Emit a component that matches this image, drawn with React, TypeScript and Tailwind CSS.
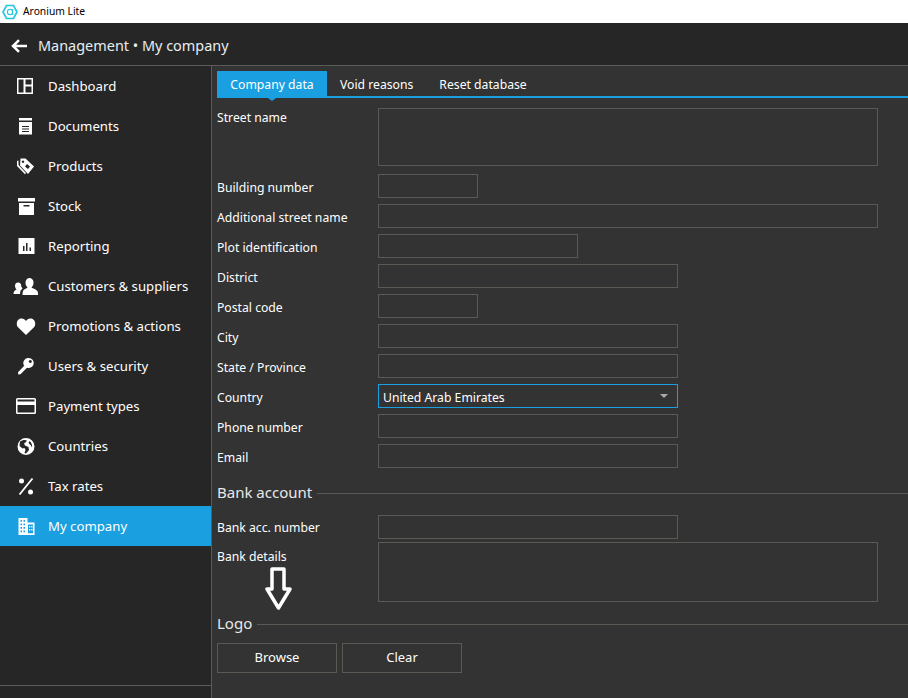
import React from "react";

const W = "#ffffff";

const icons: Record<string, React.ReactNode> = {
  dashboard: (
    <svg width="20" height="17" viewBox="0 0 20 17" fill="none"><path fill={W} fillRule="evenodd" d="M1 0h16v16H1zM2.500 1.500v13h5v-13zM9.500 1.500v5h6v-5zM9.500 8.500v6h6v-6z" /></svg>
  ),
  documents: (
    <svg width="20" height="17" viewBox="0 0 20 17"><path fill={W} fillRule="evenodd" d="M3 0h13v2.500H3zM3 4h13v12.500H3zM6 8v1h7V8zM6 10.500v1h7v-1zM6 13v1h7v-1z" /></svg>
  ),
  products: (
    <svg width="20" height="17" viewBox="0 0 20 17"><path fill={W} fillRule="evenodd" d="M4.500 0.500h5l8.500 8-6 7.500-8-8.500zM7 2.500a1.200 1.200 0 1 0 .01 0zM11 6l-2 2.500 3 2.500 2-2.500z" /><path fill={W} d="M2.500 2.500v4.500l7.500 8-1 1.200L1 8V3z" /></svg>
  ),
  stock: (
    <svg width="20" height="17" viewBox="0 0 20 17"><path fill={W} fillRule="evenodd" d="M2 0h17v3.500H2zM3 5h15v12H3zM7.500 7v1.500h6V7z" /></svg>
  ),
  reporting: (
    <svg width="20" height="17" viewBox="0 0 20 17"><path fill={W} fillRule="evenodd" d="M2.500 0h16v16h-16zM7 8v5h1.500V8zM10 5v8h1.500V5zM13.500 9.500V13H15V9.500z" /></svg>
  ),
  customers: (
    <svg width="26" height="17" viewBox="0 0 26 17"><path fill={W} d="M10 13.500c0-2 3.500-3 4.500-4-1.500-1.500-2-3-2-5C12.500 1.500 14.500 0 16.500 0s4 1.500 4 4.500c0 2-.5 3.500-2 5 1 1 6.500 2 6.500 5.500v2H9.500c0-1 0-2.500.5-3.500z" /><path fill={W} d="M0.500 16c0-2.500 1-3.500 3-4.500-1-1-1.500-2.300-1.500-3.700C2 5.500 3.500 4.500 5 4.500c1.300 0 2.300.6 3 1.800 0 1.700.5 3 1.500 4.200-.8 1-1.800 1.500-2 2.500-.3 1-.5 2-.5 3z" /></svg>
  ),
  heart: (
    <svg width="20" height="17" viewBox="0 0 20 17"><path fill={W} d="M10 17 2.300 9.600C.8 8.200.8 6.800.8 5.500.8 2.500 3 .5 5.700.5 7.500.5 9 1.500 10 3c1-1.500 2.500-2.500 4.300-2.500 2.700 0 4.900 2 4.900 5 0 1.300 0 2.700-1.500 4.100z" /></svg>
  ),
  key: (
    <svg width="20" height="17" viewBox="0 0 20 17"><path fill={W} fillRule="evenodd" d="M12.800 0a5 5 0 1 1-1.800 9.700L4.500 16.300 2.300 16.500 2 14.300l6.200-6.500A5 5 0 0 1 12.800 0zM14.300 2a1.500 1.500 0 1 0 .01 0z" /></svg>
  ),
  card: (
    <svg width="20" height="16" viewBox="0 0 20 16"><path fill={W} fillRule="evenodd" d="M1.500 0h17A1.500 1.500 0 0 1 20 1.500v13a1.500 1.500 0 0 1-1.500 1.500h-17A1.500 1.500 0 0 1 0 14.500v-13A1.500 1.500 0 0 1 1.500 0zM1.500 1.500V3.500h17V1.500zM1.500 7v7.500h17V7z" /></svg>
  ),
  globe: (
    <svg width="20" height="17" viewBox="0 0 20 17"><path fill={W} fillRule="evenodd" d="M10 0a8.500 8.500 0 1 1 0 17 8.500 8.500 0 0 1 0-17zM4 3.500 3.500 8l3 2.500 2-.5 1 2-1 3 1.500.5 3-3.500-.5-3-3.500-1.500-1-2 2-1.500 1-1.500C9 1.500 6 2 4 3.500zM13.500 3l-1 2 2.500 2.500 1 2c.5-2-.5-5-2.500-6.500z" /></svg>
  ),
  percent: (
    <svg width="20" height="17" viewBox="0 0 20 17"><circle cx="5.500" cy="3" r="2.500" fill={W} /><circle cx="14.500" cy="14" r="2.500" fill={W} /><path d="M3.500 16.500 16.500.5" stroke={W} strokeWidth="1.800" /></svg>
  ),
  company: (
    <svg width="20" height="17" viewBox="0 0 20 17"><path fill={W} fillRule="evenodd" d="M2.500 0h9v4.500h7V17h-16zM4.500 2v1.800h1.500V2zM7.500 2v1.800H9V2zM4.500 5.500v1.800h1.500V5.500zM7.500 5.500v1.800H9V5.500zM4.500 9v1.800h1.500V9zM7.500 9v1.800H9V9zM4.500 12.500v1.800h1.500v-1.800zM7.500 12.500v1.800H9v-1.800zM12 6.500v8.800h5V6.500zM13 8h1.300v1.500H13zM15.200 8h1.300v1.500h-1.300zM13 11h1.300v1.500H13zM15.200 11h1.300v1.500h-1.300z" /></svg>
  ),
};

const nav: [string, string][] = [
  ["dashboard", "Dashboard"],
  ["documents", "Documents"],
  ["products", "Products"],
  ["stock", "Stock"],
  ["reporting", "Reporting"],
  ["customers", "Customers & suppliers"],
  ["heart", "Promotions & actions"],
  ["key", "Users & security"],
  ["card", "Payment types"],
  ["globe", "Countries"],
  ["percent", "Tax rates"],
  ["company", "My company"],
];

function Row({ label, w }: { label: string; w: string }) {
  return (
    <div className="flex items-center h-6 mt-[6px]">
      <div className="w-[161px] shrink-0 pt-[5px]">{label}</div>
      <div className={`${w} h-6 border border-[#5a5a55]`} />
    </div>
  );
}

function Section({ title }: { title: string }) {
  return (
    <div className="flex items-center gap-[5px] h-[23px] text-[15px] text-[#e8e8e8]">
      <span className="pb-[2px]">{title}</span>
      <div className="flex-1 h-px bg-[#5a5a55]" />
    </div>
  );
}

export default function App() {
  return (
    <div
      className="w-[908px] h-[698px] overflow-hidden flex flex-col bg-[#262626] text-white"
      style={{ fontFamily: '"Noto Sans", "Open Sans", sans-serif' }}
    >
      <div className="h-[23px] bg-white flex items-center text-black text-[10.3px] shrink-0">
        <svg className="ml-[2px]" width="16" height="16" viewBox="0 0 16 16" fill="none">
          <path d="M4.500 1.500h7L15 8l-3.500 6.500h-7L1 8z" stroke="#22c7e0" strokeWidth="1.700" />
          <path d="M10.600 5v4.700c0 .7.300.9.900.8M10.600 8a2.600 2.700 0 1 1-5.200 0 2.600 2.700 0 0 1 5.200 0z" stroke="#22c7e0" strokeWidth="1.100" />
        </svg>
        <span className="ml-[5px]">Aronium Lite</span>
      </div>

      <div className="h-[43px] shrink-0 flex items-center border-b border-[#5a5a5a] pt-1">
        <svg className="ml-[11px]" width="17" height="14" viewBox="0 0 17 14" fill="none">
          <path d="M16 7H2.500M8 1.200 2 7l6 5.800" stroke="#fff" strokeWidth="2.500" />
        </svg>
        <span className="ml-[10px] text-[14.450px] text-[#e6eef2]">Management • My company</span>
      </div>

      <div className="flex flex-1 min-h-0">
        <aside className="w-[212px] shrink-0 border-r border-[#5a5a5a] flex flex-col">
          <nav className="flex-1">
            {nav.map(([k, t]) => (
              <div
                key={k}
                className={`h-10 flex items-center text-[13.200px] ${k === "company" ? "bg-[#1a9fe0]" : ""}`}
              >
                <span className="w-[48px] flex justify-center pl-[3px] shrink-0">{icons[k]}</span>
                <span className="pt-[2px]">{t}</span>
              </div>
            ))}
          </nav>
          <div className="h-[13px] border-t border-[#5a5a5a]" />
        </aside>

        <main className="flex-1 min-w-0 bg-[#333333] pt-[5px] pl-[5px] relative text-[12.200px]">
          <div className="flex items-end h-[27px] border-b-2 border-[#1a9fe0]">
            <div className="w-[110px] h-[25px] bg-[#1a9fe0] flex items-center justify-center relative pt-[4px]">
              Company data
              <span className="absolute left-1/2 -bottom-[5px] -translate-x-1/2 w-0 h-0 border-x-[4px] border-x-transparent border-t-[3px] border-t-[#1a9fe0]" />
            </div>
            <div className="h-[25px] flex items-center ml-[13px] pt-[4px]">Void reasons</div>
            <div className="h-[25px] flex items-center ml-[26px] pt-[4px]">Reset database</div>
          </div>

          <div className="flex mt-[10px] h-[58px]">
            <div className="w-[161px] shrink-0 pt-px">Street name</div>
            <div className="w-[500px] border border-[#5a5a55]" />
          </div>
          <div className="h-[2px]" />
          <Row label="Building number" w="w-[100px]" />
          <Row label="Additional street name" w="w-[500px]" />
          <Row label="Plot identification" w="w-[200px]" />
          <Row label="District" w="w-[300px]" />
          <Row label="Postal code" w="w-[100px]" />
          <Row label="City" w="w-[300px]" />
          <Row label="State / Province" w="w-[300px]" />
          <div className="flex items-center h-6 mt-[6px]">
            <div className="w-[161px] shrink-0 pt-[5px]">Country</div>
            <div className="w-[300px] h-6 border border-[#1a9fe0] flex items-center justify-between pl-1 pr-[9px]">
              <span className="pt-[5px]">United Arab Emirates</span>
              <span className="w-0 h-0 border-x-[4px] border-x-transparent border-t-[4px] border-t-[#aaaaaa]" />
            </div>
          </div>
          <Row label="Phone number" w="w-[300px]" />
          <Row label="Email" w="w-[300px]" />

          <div className="mt-[14px]"><Section title="Bank account" /></div>

          <div className="flex items-center h-6 mt-[10px]">
            <div className="w-[161px] shrink-0 pt-[2px]">Bank acc. number</div>
            <div className="w-[300px] h-6 border border-[#5a5a55]" />
          </div>
          <div className="flex h-[60px] mt-[3px]">
            <div className="w-[161px] shrink-0 pt-[6px]">Bank details</div>
            <div className="w-[500px] border border-[#5a5a55]" />
          </div>

          <div className="mt-[11px]"><Section title="Logo" /></div>

          <div className="flex gap-[5px] mt-[7px] text-[13px]">
            <div className="w-[120px] h-[30px] border border-[#5a5a55] flex items-center justify-center">Browse</div>
            <div className="w-[120px] h-[30px] border border-[#5a5a55] flex items-center justify-center">Clear</div>
          </div>

          <svg className="absolute left-[53px] top-[501px]" width="28" height="44" viewBox="0 0 28 44" fill="none">
            <path d="M7 2h12v20h6L13.500 41 2 22h5z" stroke="#fff" strokeWidth="3.500" strokeLinejoin="round" />
          </svg>
        </main>
      </div>
    </div>
  );
}
